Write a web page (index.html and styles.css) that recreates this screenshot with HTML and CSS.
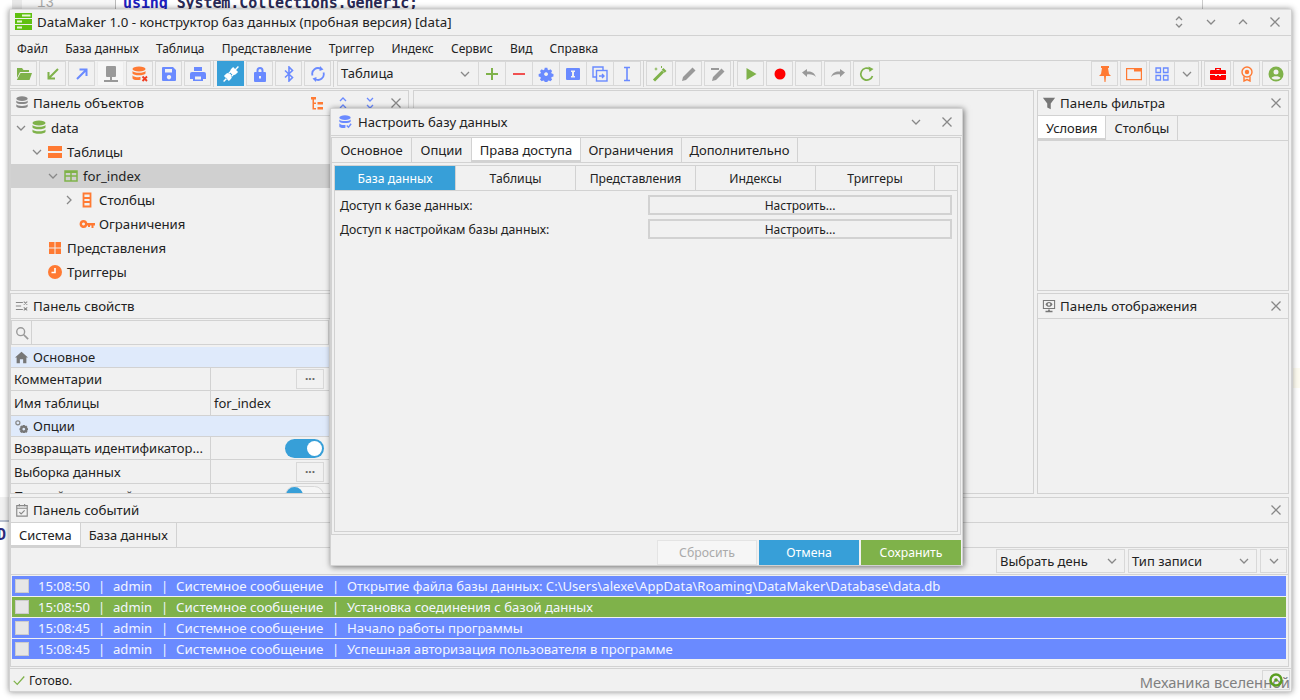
FILE: index.html
```html
<!DOCTYPE html>
<html lang="ru">
<head>
<meta charset="utf-8">
<title>DataMaker</title>
<link rel="stylesheet" href="styles.css">
</head>
<body>
<div class="behind">
  <span class="gutter"><span class="lineno">13</span></span>
  <span class="code-line"><b class="kw">using</b> System.Collections.Generic;</span>
  <span class="guide"></span>
  <span class="strayband"></span>
  <span class="stray">D</span>
  <span class="cream"></span>
</div>
<div class="window">
  <header class="titlebar">
    <svg class="logo" viewBox="0 0 17 17"><path fill="#5fc010" d="M0 0h17v5H0zM0 6h17v5H0zM0 12h17v5H0z"/><path fill="#e8f5d8" d="M7 1.500h8.500v2H7zM2 7.500h5v2H2zM2 13.500h5v2H2z"/></svg>
    <span class="title-text">DataMaker 1.0 - конструктор баз данных (пробная версия) [data]</span>
    <div class="wincontrols">
      <svg class="ic16" viewBox="0 0 16 16"><path class="st" d="M5 6l3-3 3 3M5 10l3 3 3-3"/></svg>
      <svg class="ic16" viewBox="0 0 16 16"><path class="st" d="M4 6l4 4 4-4"/></svg>
      <svg class="ic16" viewBox="0 0 16 16"><path class="st" d="M4 10l4-4 4 4"/></svg>
      <svg class="ic16" viewBox="0 0 16 16"><path class="st" d="M3.500 3.500l9 9M12.500 3.500l-9 9"/></svg>
    </div>
  </header>
  <nav class="menubar">
    <span>Файл</span><span>База данных</span><span>Таблица</span><span>Представление</span><span>Триггер</span><span>Индекс</span><span>Сервис</span><span>Вид</span><span>Справка</span>
  </nav>
  <div class="toolbar">
    <div class="tgroup">
      <button class="tb"><svg viewBox="0 0 16 16"><path fill="#7fb24a" d="M1 2h5l1.500 2H13v2H4L1 12z"/><path fill="#7fb24a" d="M4.500 7H16l-2.500 7H.8z"/></svg></button>
      <button class="tb"><svg viewBox="0 0 16 16"><path fill="none" stroke="#7fb24a" stroke-width="2" d="M13 3L4 12M3.500 6v6.500H10"/></svg></button>
      <button class="tb"><svg viewBox="0 0 16 16"><path fill="none" stroke="#6a8aff" stroke-width="2" d="M3 13l9-9M5.500 3.500H12.500V10"/></svg></button>
      <button class="tb dim"><svg viewBox="0 0 16 16"><path fill="#999" d="M4 0h8a1 1 0 0 1 1 1v9a1 1 0 0 1-1 1H4a1 1 0 0 1-1-1V1a1 1 0 0 1 1-1zM7 11h2v3H7zM1 14h14v2H1z"/></svg></button>
      <button class="tb"><svg viewBox="0 0 16 16"><g fill="#ff7a33"><ellipse cx="7" cy="3" rx="6.500" ry="2.600"/><path d="M.5 5c1 2.400 12 2.400 13 0v2.400c-1 2.400-12 2.400-13 0zM.5 9.200c1 2.400 9 2.400 8 1.400v3.200c-3 .8-8 0-8-1.600z"/></g><path fill="none" stroke="#f03c20" stroke-width="1.800" d="M10.500 10.500l4.500 4.500M15 10.500L10.500 15"/></svg></button>
      <button class="tb"><svg viewBox="0 0 16 16"><path fill="#6a8aff" fill-rule="evenodd" d="M2 1h10l3 3v10a1 1 0 0 1-1 1H2a1 1 0 0 1-1-1V2a1 1 0 0 1 1-1zM4 3v3.500h7V3zM8 9a2.200 2.200 0 1 0 .01 0z"/></svg></button>
      <button class="tb"><svg viewBox="0 0 16 16"><path fill="#6a8aff" fill-rule="evenodd" d="M4 1h8v4H4zM2 6h12a2 2 0 0 1 2 2v5h-3v2H3v-2H0V8a2 2 0 0 1 2-2zM5 10.500V13.500h6V10.500z"/></svg></button>
    </div>
    <i class="tsep wide"></i>
    <div class="tgroup">
      <button class="tb on"><svg viewBox="0 0 16 16"><g fill="#fff" transform="rotate(45 8 8)"><path d="M4.500 1.500h7V4a3.500 3.500 0 0 1-7 0zM7.300-2.500h1.400v4H7.300zM4.500 14.500h7V12a3.500 3.500 0 0 0-7 0zM7.300 14h1.400v4.500H7.300zM5.300 6.500h1.300v3H5.300zM9.400 6.500h1.300v3H9.400z"/></g></svg></button>
      <button class="tb"><svg viewBox="0 0 16 16"><path fill="#6a8aff" fill-rule="evenodd" d="M4.500 6V4.500a3.500 3.500 0 0 1 7 0V6H13a1 1 0 0 1 1 1v8a1 1 0 0 1-1 1H3a1 1 0 0 1-1-1V7a1 1 0 0 1 1-1zM6.500 6h3V4.500a1.500 1.500 0 0 0-3 0zM7 10v2.500h2V10z"/></svg></button>
      <button class="tb"><svg viewBox="0 0 16 16"><path fill="none" stroke="#6a8aff" stroke-width="1.600" d="M4 4.500l7.500 7L8 15V1l3.500 3.500L4 11.500"/></svg></button>
      <button class="tb"><svg viewBox="0 0 16 16"><g fill="none" stroke="#6a8aff" stroke-width="1.800"><path d="M2.500 9.500A5.700 5.700 0 0 1 11 3M13.500 6.500A5.700 5.700 0 0 1 5 13"/></g><path fill="#6a8aff" d="M10 0l3.500 3.500L9.500 5zM6 16l-3.500-3.500L6.500 11z"/></svg></button>
    </div>
    <i class="tsep wide"></i>
    <div class="tjoined">
      <div class="tcombo"><span class="tcombo-text">Таблица</span><svg class="ic12" viewBox="0 0 12 12"><path class="st" d="M2 4l4 4 4-4"/></svg></div>
      <button class="tb"><svg viewBox="0 0 16 16"><path fill="#7fb24a" d="M7 2h2v5h5v2H9v5H7V9H2V7h5z"/></svg></button>
      <button class="tb"><svg viewBox="0 0 16 16"><path fill="#f05050" d="M2 7h12v2H2z"/></svg></button>
      <button class="tb"><svg viewBox="0 0 16 16"><path fill="#6a8aff" fill-rule="evenodd" d="M6.500 1h3l.4 2 1.300.6 1.800-1.100 2 2-1.100 1.800.6 1.300 2 .4v3l-2 .4-.6 1.300 1.100 1.800-2 2-1.800-1.100-1.300.6-.4 2h-3l-.4-2-1.300-.6-1.800 1.100-2-2 1.100-1.800-.6-1.300-2-.4v-3l2-.4.6-1.300L1 4.500l2-2 1.800 1.100 1.300-.6zM8 6a2.200 2.200 0 1 0 .01 0z" transform="translate(1.100 1) scale(.87)"/></svg></button>
      <button class="tb"><svg viewBox="0 0 16 16"><path fill="#6a8aff" fill-rule="evenodd" d="M2 2h12a1 1 0 0 1 1 1v10a1 1 0 0 1-1 1H2a1 1 0 0 1-1-1V3a1 1 0 0 1 1-1zM6 4.500V6h1v4H6v1.500h4V10H9V6h1V4.500z"/></svg></button>
      <button class="tb"><svg viewBox="0 0 16 16"><g fill="none" stroke="#6a8aff" stroke-width="1.400"><path d="M4 11H1V1h10v3"/><rect x="4.500" y="4.500" width="10.500" height="10.500"/><path d="M7 10h5M10 8l2 2-2 2"/></g></svg></button>
      <button class="tb"><svg viewBox="0 0 16 16"><path fill="none" stroke="#6a8aff" stroke-width="1.600" d="M5 1.500h6M8 1.500v13M5 14.500h6"/></svg></button>
    </div>
    <i class="tsep"></i>
    <div class="tgroup">
      <button class="tb"><svg viewBox="0 0 16 16"><path fill="none" stroke="#7fb24a" stroke-width="3" d="M2 14.500L11 5.500"/><path fill="#7fb24a" d="M11.500 2l3 3-1.800 1.800-3-3zM4 1l.6 1.400L6 3l-1.400.6L4 5l-.6-1.400L2 3l1.400-.6zM9 0h1v2H9z"/></svg></button>
      <button class="tb"><svg viewBox="0 0 16 16"><path fill="#999" d="M11.500 1.500l3 3L5 14l-4 1 1-4z"/></svg></button>
      <button class="tb"><svg viewBox="0 0 16 16"><path fill="#999" d="M11.500 2.500l3 3L6 14l-4 1 1-4zM1 2h8v2H1z"/></svg></button>
    </div>
    <i class="tsep wide"></i>
    <div class="tgroup">
      <button class="tb"><svg viewBox="0 0 16 16"><path fill="#7fb24a" d="M3.500 2l10 6-10 6z"/></svg></button>
      <button class="tb"><svg viewBox="0 0 16 16"><circle cx="8" cy="8" r="5.500" fill="#f00"/></svg></button>
      <button class="tb"><svg viewBox="0 0 16 16"><path fill="#999" d="M1 6.500l5-3.500v2.500c4-.5 7.500 1 9 5.500-2-2-5-3-9-2.500V11z"/></svg></button>
      <button class="tb"><svg viewBox="0 0 16 16"><path fill="#999" d="M15 6.500L10 3v2.500c-4-.5-7.500 1-9 5.500 2-2 5-3 9-2.500V11z"/></svg></button>
      <button class="tb"><svg viewBox="0 0 16 16"><path fill="none" stroke="#7fb24a" stroke-width="1.700" d="M13.500 10A6 6 0 1 1 11 3"/><path fill="#7fb24a" d="M9.500 .5l5 2.500-4 3z"/></svg></button>
    </div>
    <div class="tspacer"></div>
    <div class="tgroup">
      <button class="tb"><svg viewBox="0 0 16 16"><path fill="#ff7a33" d="M4 0h8v2h-1l1 6 2 2H9l-.5 6h-1L7 10H2l2-2 1-6H4z"/></svg></button>
      <button class="tb"><svg viewBox="0 0 16 16"><path fill="none" stroke="#ff7a33" stroke-width="1.200" d="M.6 2.600h14.800v11H.6z"/><path fill="#ff7a33" d="M8 2h8v3.500H8z"/></svg></button>
      <div class="tjoined grid-pair">
        <button class="tb narrow"><svg viewBox="0 0 16 16"><path fill="none" stroke="#6a8aff" stroke-width="1.300" d="M2 2h4.500v4.500H2zM9.500 2H14v4.500H9.500zM2 9.500h4.500V14H2zM9.500 9.500H14V14H9.500z"/></svg></button>
        <button class="tb narrow2"><svg viewBox="0 0 16 16"><path class="st" d="M4 6l4 4 4-4"/></svg></button>
      </div>
    </div>
    <i class="tsep"></i>
    <div class="tgroup">
      <button class="tb"><svg viewBox="0 0 16 16"><path fill="#f00" fill-rule="evenodd" d="M5 4V2h6v2h4a1 1 0 0 1 1 1v3H0V5a1 1 0 0 1 1-1zM6.500 3v1h3V3zM0 9h5v1h2V9h2v1h2V9h5v4a1 1 0 0 1-1 1H1a1 1 0 0 1-1-1z"/></svg></button>
      <button class="tb"><svg viewBox="0 0 16 16"><g fill="none" stroke="#ff7a33" stroke-width="1.400"><circle cx="8" cy="6" r="5"/><path d="M5 10.500V15l3-1.500 3 1.500v-4.500"/></g><circle cx="8" cy="6" r="2.200" fill="#ff7a33"/></svg></button>
      <button class="tb"><svg viewBox="0 0 16 16"><circle cx="8" cy="8" r="7.500" fill="#7fb24a"/><circle cx="8" cy="6" r="2.500" fill="#f1f1f1"/><path fill="#f1f1f1" d="M3.500 12c1-2.500 8-2.500 9 0-2 2-7 2-9 0z"/></svg></button>
    </div>
  </div>

  <div class="workspace">
    <div class="col-left">
      <section class="panel panel-top">
        <div class="phead">
          <svg class="pic" viewBox="0 0 16 16"><g fill="#888"><ellipse cx="8" cy="3" rx="6.500" ry="2.600"/><path d="M1.500 5c1 2.400 12 2.400 13 0v2.400c-1 2.400-12 2.400-13 0zM1.500 9.500c1 2.400 12 2.400 13 0v2.400c-1 2.400-12 2.400-13 0z"/></g></svg>
          <span class="ptitle">Панель объектов</span>
          <div class="pactions">
            <svg class="ic16" viewBox="0 0 16 16"><path fill="#ff7a33" d="M2 2h5v2.500H2zM3.500 4.500H5V13h2v1.500H3.500zM5 7.500h2V9H5zM8.500 7h5.500v2.500H8.500zM8.500 12h5.500v2.500H8.500z"/></svg>
            <svg class="ic16" viewBox="0 0 16 16"><path class="st blue" d="M5 6l3-3 3 3M5 13l3-3 3 3"/></svg>
            <svg class="ic16" viewBox="0 0 16 16"><path class="st blue" d="M5 3l3 3 3-3M5 10l3 3 3-3"/></svg>
            <svg class="ic16" viewBox="0 0 16 16"><path class="st" d="M3.500 3.500l9 9M12.500 3.500l-9 9"/></svg>
          </div>
        </div>
        <ul class="tree">
          <li class="node l1"><svg class="chev" viewBox="0 0 12 12"><path class="st" d="M2 4l4 4 4-4"/></svg><svg class="nic" viewBox="0 0 16 16"><g fill="#7fb24a"><ellipse cx="8" cy="3" rx="6.500" ry="2.600"/><path d="M1.500 5c1 2.400 12 2.400 13 0v2.400c-1 2.400-12 2.400-13 0zM1.500 9.500c1 2.400 12 2.400 13 0v2.400c-1 2.400-12 2.400-13 0z"/></g></svg><span>data</span></li>
          <li class="node l2"><svg class="chev" viewBox="0 0 12 12"><path class="st" d="M2 4l4 4 4-4"/></svg><svg class="nic" viewBox="0 0 16 16"><path fill="#ff7a33" d="M1 2h14v5H1zM1 9h14v5H1z"/></svg><span>Таблицы</span></li>
          <li class="node l3 sel"><svg class="chev" viewBox="0 0 12 12"><path class="st" d="M2 4l4 4 4-4"/></svg><svg class="nic" viewBox="0 0 16 16"><path fill="none" stroke="#7fb24a" stroke-width="1.500" d="M2 3h12v10H2zM2 8h12M8 3v10"/><path fill="#7fb24a" d="M2 3h12v2H2z"/></svg><span>for_index</span></li>
          <li class="node l4"><svg class="chev" viewBox="0 0 12 12"><path class="st" d="M4 2l4 4-4 4"/></svg><svg class="nic" viewBox="0 0 16 16"><path fill="none" stroke="#ff7a33" stroke-width="1.800" d="M4.500 1.500h7v13h-7zM4.500 6h7M4.500 10h7"/></svg><span>Столбцы</span></li>
          <li class="node l4"><i class="chev"></i><svg class="nic" viewBox="0 0 16 16"><path fill="#ff7a33" fill-rule="evenodd" d="M4.500 4a4 4 0 0 1 3.800 3H16v2.500h-1.500V12h-2V9.500h-1.500V11H9V9.500h-.7A4 4 0 1 1 4.500 4zm0 2.500a1.500 1.500 0 1 0 .01 0z"/></svg><span>Ограничения</span></li>
          <li class="node l2"><i class="chev"></i><svg class="nic" viewBox="0 0 16 16"><path fill="#ff7a33" d="M2 2h5.500v5.500H2zM8.500 2H14v5.500H8.500zM2 8.500h5.500V14H2zM8.500 8.500H14V14H8.500z"/></svg><span>Представления</span></li>
          <li class="node l2"><i class="chev"></i><svg class="nic" viewBox="0 0 16 16"><circle cx="8" cy="8" r="7" fill="#ff7a33"/><path fill="none" stroke="#fff" stroke-width="1.600" d="M8 4v4.500H4.500"/></svg><span>Триггеры</span></li>
        </ul>
      </section>
      <section class="panel panel-bottom">
        <div class="phead">
          <svg class="pic" viewBox="0 0 16 16"><path fill="none" stroke="#888" stroke-width="1.200" d="M1 4h8M1 8h6M1 12h8M10 3l4 3.500M14 3l-4 3.500M10 9.500l4 3.500M14 9.500L10 13"/></svg>
          <span class="ptitle">Панель свойств</span>
        </div>
        <div class="propbody">
          <div class="searchrow">
            <span class="searchbtn"><svg class="ic14" viewBox="0 0 16 16"><circle cx="6.500" cy="6.500" r="4.500" fill="none" stroke="#999" stroke-width="1.600"/><path stroke="#999" stroke-width="2" d="M10 10l5 5"/></svg></span>
            <span class="searchfield"></span>
          </div>
          <div class="section"><svg class="secic" viewBox="0 0 16 16"><path fill="#777" d="M8 1l8 7h-2v7h-4v-5H6v5H2V8H0z"/></svg><span>Основное</span></div>
          <div class="prop"><span class="pname">Комментарии</span><span class="pval"><button class="dots">···</button></span></div>
          <div class="prop h25"><span class="pname">Имя таблицы</span><span class="pval text">for_index</span></div>
          <div class="section"><svg class="secic" viewBox="0 0 16 16"><circle cx="3.500" cy="3.500" r="2.500" fill="none" stroke="#888" stroke-width="1.500"/><path fill="#777" fill-rule="evenodd" d="M9.500 6h2.500l.4 1.500 1.300-.7 1.700 1.700-.7 1.300 1.300.4v2.300l-1.300.4.700 1.300-1.700 1.700-1.300-.7-.4 1.300H9.500l-.4-1.300-1.300.7-1.700-1.700.7-1.300-1.300-.4V10.200l1.300-.4-.7-1.300 1.700-1.700 1.300.7zM10.800 9.500a1.700 1.700 0 1 0 .01 0z"/></svg><span>Опции</span></div>
          <div class="prop"><span class="pname">Возвращать идентификатор...</span><span class="pval"><span class="toggle on"></span></span></div>
          <div class="prop h24"><span class="pname">Выборка данных</span><span class="pval"><button class="dots">···</button></span></div>
          <div class="prop"><span class="pname low">Полный текстовый</span><span class="pval"><span class="toggle off"></span></span></div>
        </div>
      </section>
    </div>
    <div class="col-center panel"></div>
    <div class="col-right">
      <section class="panel panel-top panel-stack">
        <div class="phead">
          <svg class="pic" viewBox="0 0 16 16"><path fill="#777" d="M1 2h14L10 8.500V15l-4-2V8.500z"/></svg>
          <span class="ptitle">Панель фильтра</span>
          <div class="pactions"><svg class="ic16" viewBox="0 0 16 16"><path class="st" d="M3.500 3.500l9 9M12.500 3.500l-9 9"/></svg></div>
        </div>
        <div class="tabs"><span class="tab active">Условия</span><span class="tab">Столбцы</span></div>
        <div class="tabbody"></div>
      </section>
      <section class="panel panel-bottom">
        <div class="phead">
          <svg class="pic" viewBox="0 0 16 16"><path fill="#777" fill-rule="evenodd" d="M1 1h14v10.500H1zM2.200 2.200v8h11.600v-8zM7 12h2v1.500h3V15H4v-1.500h3z"/><path fill="#777" fill-rule="evenodd" d="M8 3.500c2 0 3.500 1.500 4 2.700-.5 1.200-2 2.700-4 2.700S4.500 7.400 4 6.200c.5-1.200 2-2.700 4-2.700zm0 1.200a1.500 1.500 0 1 0 .01 0z"/></svg>
          <span class="ptitle">Панель отображения</span>
          <div class="pactions"><svg class="ic16" viewBox="0 0 16 16"><path class="st" d="M3.500 3.500l9 9M12.500 3.500l-9 9"/></svg></div>
        </div>
      </section>
    </div>
  </div>

  <section class="panel panel-events">
    <div class="phead">
      <svg class="pic" viewBox="0 0 16 16"><path fill="none" stroke="#888" stroke-width="1.300" d="M2 3h12v12H2zM2 6h12M5 1v3M11 1v3M5 10.500l2 2 4-4"/></svg>
      <span class="ptitle">Панель событий</span>
      <div class="pactions"><svg class="ic16" viewBox="0 0 16 16"><path class="st" d="M3.500 3.500l9 9M12.500 3.500l-9 9"/></svg></div>
    </div>
    <div class="tabs"><span class="tab active">Система</span><span class="tab">База данных</span></div>
    <div class="filters">
      <div class="fcombo day"><span>Выбрать день</span><svg class="ic12" viewBox="0 0 12 12"><path class="st" d="M2 4l4 4 4-4"/></svg></div>
      <div class="fcombo kind"><span>Тип записи</span><svg class="ic12" viewBox="0 0 12 12"><path class="st" d="M2 4l4 4 4-4"/></svg></div>
      <div class="fcombo more"><svg class="ic12" viewBox="0 0 12 12"><path class="st" d="M2 4l4 4 4-4"/></svg></div>
    </div>
    <div class="log">
      <div class="logrow"><i class="chk"></i><span class="ct">15:08:50</span><span class="cs">|</span><span class="cu">admin</span><span class="cs">|</span><span class="cy">Системное сообщение</span><span class="cs">|</span><span>Открытие файла базы данных: C:\Users\alexe\AppData\Roaming\DataMaker\Database\data.db</span></div>
      <div class="logrow ok"><i class="chk"></i><span class="ct">15:08:50</span><span class="cs">|</span><span class="cu">admin</span><span class="cs">|</span><span class="cy">Системное сообщение</span><span class="cs">|</span><span>Установка соединения с базой данных</span></div>
      <div class="logrow"><i class="chk"></i><span class="ct">15:08:45</span><span class="cs">|</span><span class="cu">admin</span><span class="cs">|</span><span class="cy">Системное сообщение</span><span class="cs">|</span><span>Начало работы программы</span></div>
      <div class="logrow"><i class="chk"></i><span class="ct">15:08:45</span><span class="cs">|</span><span class="cu">admin</span><span class="cs">|</span><span class="cy">Системное сообщение</span><span class="cs">|</span><span>Успешная авторизация пользователя в программе</span></div>
    </div>
  </section>

  <footer class="statusbar">
    <svg class="ic14" viewBox="0 0 16 16"><path fill="none" stroke="#7fb24a" stroke-width="1.500" d="M2 9l4 4 8-9"/></svg>
    <span class="status-text">Готово.</span>
    <span class="status-right">Механика вселенной</span>
    <span class="status-box"><svg class="ic16" viewBox="0 0 16 16"><circle cx="8" cy="8" r="5.500" fill="none" stroke="#5a9e20" stroke-width="2.400"/><circle cx="8" cy="8" r="1.800" fill="#5a9e20"/></svg></span>
  </footer>

  <div class="dialog">
    <div class="dhead">
      <svg class="pic" viewBox="0 0 16 16"><g fill="#6a8aff"><ellipse cx="8" cy="3" rx="6.500" ry="2.600"/><path d="M1.500 5c1 2.400 12 2.400 13 0v2.400c-1 2.400-12 2.400-13 0zM1.500 9.500c1 2.400 8 2.400 7 1.500v3.500c-3 .6-7 0-7-1.500z"/></g><path fill="none" stroke="#6a8aff" stroke-width="1.600" d="M10 12l2 2 3-4"/></svg>
      <span class="dtitle">Настроить базу данных</span>
      <div class="dactions">
        <svg class="ic16" viewBox="0 0 16 16"><path class="st" d="M4 6l4 4 4-4"/></svg>
        <svg class="ic16" viewBox="0 0 16 16"><path class="st" d="M3.500 3.500l9 9M12.500 3.500l-9 9"/></svg>
      </div>
    </div>
    <div class="dframe">
      <div class="tabs dtabs"><span class="tab">Основное</span><span class="tab">Опции</span><span class="tab active">Права доступа</span><span class="tab">Ограничения</span><span class="tab">Дополнительно</span></div>
      <div class="inner">
        <div class="subtabs"><span class="stab active">База данных</span><span class="stab">Таблицы</span><span class="stab">Представления</span><span class="stab">Индексы</span><span class="stab">Триггеры</span></div>
        <div class="inner-body">
          <div class="drow"><span class="dlabel">Доступ к базе данных:</span><button class="setup">Настроить...</button></div>
          <div class="drow"><span class="dlabel">Доступ к настройкам базы данных:</span><button class="setup">Настроить...</button></div>
        </div>
      </div>
    </div>
    <div class="dfoot">
      <button class="fbtn reset">Сбросить</button>
      <button class="fbtn cancel">Отмена</button>
      <button class="fbtn save">Сохранить</button>
    </div>
  </div>
</div>
</body>
</html>
```
FILE: styles.css
```css
* { box-sizing: border-box; }
html, body { margin: 0; height: 100%; }
body {
  position: relative;
  width: 1300px;
  height: 700px;
  overflow: hidden;
  background: #fff;
  font-family: "Noto Sans", "Open Sans", sans-serif;
  font-size: 13px;
  color: #222;
  padding: 9px 0 0 9px;
}
button { font: inherit; color: inherit; }
ul { list-style: none; margin: 0; padding: 0; }
svg { display: block; flex: none; }

/* what is visible behind the application window */
.behind span { position: absolute; }
.gutter { left: 22px; top: 0; width: 94px; height: 9px; background: #f7f7f7; border-right: 1px solid #bbb; box-shadow: -10px 0 0 #e8e8e8; overflow: hidden; }
.lineno { position: absolute; left: 15px; top: -7px; font: 14px/20px "Liberation Mono", monospace; color: #aaa; }
.code-line { left: 123px; top: -7px; font: 600 15px/20px "DejaVu Sans Mono", monospace; color: #2a2a55; letter-spacing: -.09px; white-space: pre; }
.kw { color: #2020c0; font-weight: 600; }
.guide { left: 1202px; top: 0; width: 1px; height: 9px; background: #ccc; }
.strayband { left: 0; top: 497px; width: 9px; height: 25px; background: #f1f1f1; border-bottom: 2px solid #b8c0d0; }
.stray { left: -3px; top: 525px; font: 600 15px/20px "DejaVu Sans Mono", monospace; color: #2a2a80; }
.cream { left: 1293px; top: 368px; width: 7px; height: 20px; background: #fdfbf0; }

.st { fill: none; stroke: #888; stroke-width: 1.300; }
.st.blue { stroke: #6a8aff; }
.ic16 { width: 16px; height: 16px; }
.ic14 { width: 14px; height: 14px; }
.ic12 { width: 12px; height: 12px; }

/* window */
.window {
  position: relative;
  width: 1283px;
  height: 683px;
  background: #f1f1f1;
  border: 1px solid #d2d2d2;
  border-top-color: #ddd;
  box-shadow: 0 0 6px rgba(0, 0, 0, .45);
  display: flex;
  flex-direction: column;
}
.titlebar {
  height: 26px;
  flex: none;
  display: flex;
  align-items: center;
  padding: 0 8px 2px 5px;
  border-bottom: 1px solid #d2d2d2;
}
.logo { width: 17px; height: 17px; }
.title-text { margin-left: 5px; font-size: 13.300px; }
.wincontrols { margin-left: auto; display: flex; gap: 16px; }

.menubar {
  height: 25px;
  flex: none;
  display: flex;
  align-items: center;
  gap: 17.200px;
  padding-left: 7px;
  font-size: 12px;
  border-bottom: 1px solid #d2d2d2;
}

.toolbar {
  height: 28px;
  flex: none;
  display: flex;
  align-items: center;
  padding: 0 2px 2px 0;
  border-bottom: 1px solid #d2d2d2;
}
.tgroup { display: flex; gap: 2px; }
.tjoined { display: flex; }
.tb {
  width: 27px;
  height: 25px;
  padding: 0;
  background: #f1f1f1;
  border: 1px solid #d8d8d8;
  display: flex;
  align-items: center;
  justify-content: center;
}
.tb svg { width: 16px; height: 16px; }
.tb.on { background: #379fd8; border-color: #379fd8; }
.tb.dim { background: #f6f6f6; border-color: #ececec; }
.tjoined .tb { margin-left: -1px; width: 28px; }
.tjoined .tb.narrow { width: 26px; }
.tjoined .tb.narrow2 { width: 25px; }
.grid-pair .tb:first-child { margin-left: 0; }
.tsep { width: 1px; height: 27px; background: #d2d2d2; margin: 0 2px; flex: none; }
.tsep.wide { margin-right: 3px; }
.tcombo {
  width: 142px;
  height: 25px;
  border: 1px solid #d8d8d8;
  display: flex;
  align-items: center;
  justify-content: space-between;
  padding: 0 7px 0 3px;
}
.tcombo-text { padding-bottom: 2px; }
.tspacer { flex: 1; }

/* workspace */
.workspace {
  height: 405px;
  flex: none;
  display: flex;
  padding-top: 1px;
}
.panel { border: 1px solid #d2d2d2; background: #f1f1f1; }
.col-left { width: 399px; display: flex; flex-direction: column; gap: 2px; }
.col-center { width: 621px; margin-left: 4px; }
.col-right { width: 252px; margin-left: 3px; display: flex; flex-direction: column; gap: 2px; }
.panel-top { height: 201px; }
.panel-bottom { height: 201px; overflow: hidden; }
.panel-stack { display: flex; flex-direction: column; }
.phead {
  height: 25px;
  display: flex;
  align-items: center;
  padding: 0 0 1px 4px;
  border-bottom: 1px solid #d2d2d2;
}
.pic { width: 14px; height: 14px; }
.ptitle { margin-left: 4px; font-size: 13.300px; }
.pactions { margin-left: auto; display: flex; gap: 10.500px; padding-right: 4px; }

.node { height: 24px; display: flex; align-items: center; font-size: 13.200px; }
.node.sel { background: #d0d0d0; }
.l1 { padding-left: 4px; }
.l2 { padding-left: 20px; }
.l3 { padding-left: 36px; }
.l4 { padding-left: 52px; }
.chev { width: 12px; height: 12px; display: block; flex: none; margin-right: 4px; }
.nic { width: 16px; height: 16px; margin-right: 4px; }

.propbody { width: 318px; }
.searchrow { height: 28px; padding: 1px 0 2px; display: flex; }
.searchbtn { width: 21px; height: 25px; border: 1px solid #d2d2d2; display: flex; align-items: center; justify-content: center; flex: none; }
.searchfield { flex: 1; height: 25px; border: 1px solid #d2d2d2; border-left: 0; }
.section {
  height: 21px;
  background: #dfeafb;
  display: flex;
  align-items: center;
  padding-left: 4px;
  border-bottom: 1px solid #d2d2d2;
}
.secic { width: 13px; height: 13px; margin-right: 5px; }
.prop {
  height: 23px;
  display: flex;
  align-items: center;
  border-bottom: 1px solid #d2d2d2;
}
.prop.h24 { height: 24px; }
.prop.h25 { height: 25px; }
.pname { width: 200px; height: 100%; padding-left: 3px; display: flex; align-items: center; border-right: 1px solid #d2d2d2; white-space: nowrap; overflow: hidden; flex: none; }
.pname.low { padding-top: 2px; }
.pval { flex: 1; display: flex; align-items: center; justify-content: flex-end; padding-right: 5px; height: 100%; }
.pval.text { justify-content: flex-start; padding-left: 3px; }
.dots { width: 28px; height: 20px; padding: 0; border: 1px solid #d8d8d8; background: #f1f1f1; font-weight: 700; line-height: 16px; color: #666; font-size: 12px; }
.toggle { width: 39px; height: 19px; border-radius: 10px; position: relative; display: block; }
.toggle::after { content: ""; position: absolute; top: 2px; width: 15px; height: 15px; border-radius: 50%; }
.toggle.on { background: #379fd8; }
.toggle.on::after { right: 2px; background: #fff; }
.toggle.off { background: #f6f6f6; border: 1px solid #d8d8d8; }
.toggle.off::after { left: 0; top: 0; width: 17px; height: 17px; background: #379fd8; }

.tabs { height: 25px; display: flex; flex: none; border-bottom: 1px solid #d2d2d2; }
.tab { padding: 0 8px; display: flex; align-items: center; border-right: 1px solid #d2d2d2; font-size: 12.900px; }
.tab.active { background: #fff; box-shadow: inset 0 -2px 0 #d2d2d2; }
.tabbody { flex: 1; }

/* events */
.panel-events { height: 170px; flex: none; margin-top: 3px; width: 1279px; }
.filters { height: 27px; display: flex; justify-content: flex-end; align-items: center; gap: 3px; padding-right: 1px; border-bottom: 1px solid #d2d2d2; }
.fcombo { height: 24px; border: 1px solid #d8d8d8; display: flex; align-items: center; justify-content: space-between; padding: 0 6px 0 3px; }
.fcombo.day, .fcombo.kind { width: 129px; }
.fcombo.more { width: 27px; padding: 0; justify-content: center; }
.log { padding: 1px 2px 0 1px; display: flex; flex-direction: column; gap: 1px; font-size: 13.100px; }
.logrow { height: 20px; background: #6a8aff; color: #f2f5ff; display: flex; align-items: center; padding-left: 3px; white-space: nowrap; }
.logrow.ok { background: #7fb24a; }
.chk { width: 14px; height: 14px; background: #e6e6e6; border: 1px solid #ccc; flex: none; margin-right: 9px; }
.ct { width: 60px; }
.cu { width: 48px; }
.cy { width: 156px; font-size: 13.350px; }
.cs { width: 15px; }

/* status */
.statusbar { flex: 1; display: flex; align-items: center; padding-left: 2px; font-size: 12.300px; position: relative; margin-top: 1px; border-top: 1px solid #d2d2d2; }
.status-text { margin-left: 3px; }
.status-right { position: absolute; right: 1px; top: 3px; font-size: 14.700px; color: #808080; white-space: nowrap; }
.status-box { position: absolute; right: 1px; top: 1px; width: 28px; height: 20px; border: 1px solid #d8d8d8; display: flex; align-items: center; justify-content: center; }

/* dialog floats over the workspace */
.dialog {
  position: absolute;
  left: 320px;
  top: 98px;
  width: 633px;
  height: 458px;
  background: #f1f1f1;
  border: 1px solid #d2d2d2;
  box-shadow: 1px 1px 6px rgba(0, 0, 0, .55);
  display: flex;
  flex-direction: column;
}
.dhead { height: 27px; flex: none; display: flex; align-items: center; padding-left: 7px; border-bottom: 1px solid #d2d2d2; }
.dtitle { margin-left: 6px; font-size: 13.100px; }
.dactions { margin-left: auto; display: flex; gap: 15px; padding-right: 7px; }
.dframe { flex: 1; margin: 1px 1px 0 0; border: 1px solid #d2d2d2; display: flex; flex-direction: column; }
.dtabs { height: 25px; }
.dtabs .tab { justify-content: center; padding: 0; font-size: 13px; }
.dtabs .tab:nth-child(1) { width: 80px; }
.dtabs .tab:nth-child(2) { width: 60px; }
.dtabs .tab:nth-child(3) { width: 109px; }
.dtabs .tab:nth-child(4) { width: 101px; }
.dtabs .tab:nth-child(5) { width: 116px; }
.inner { flex: 1; margin: 2px; border: 1px solid #d2d2d2; display: flex; flex-direction: column; }
.subtabs { height: 25px; flex: none; display: flex; border-bottom: 1px solid #d2d2d2; }
.stab { width: 120px; display: flex; align-items: center; justify-content: center; border-right: 1px solid #d2d2d2; font-size: 12.200px; }
.stab:first-child { width: 121px; }
.stab:last-child { width: 119px; }
.stab.active { background: #379fd8; color: #fff; }
.inner-body { padding: 4px 5px; display: flex; flex-direction: column; gap: 4px; }
.drow { display: flex; justify-content: space-between; align-items: center; height: 20px; font-size: 12.250px; }
.setup { width: 304px; height: 20px; padding: 0; border: 2px solid #d2d2d2; background: #f1f1f1; font-size: 12px; }
.dfoot { height: 30px; flex: none; display: flex; justify-content: flex-end; gap: 2px; padding: 5px 1px 0 0; font-size: 12.250px; }
.fbtn { width: 100px; height: 25px; padding: 0; border: 0; }
.reset { background: #f6f6f6; border: 1px solid #e4e4e4; color: #aaa; }
.cancel { background: #379fd8; color: #fff; }
.save { background: #7fb24a; color: #fff; }
```
